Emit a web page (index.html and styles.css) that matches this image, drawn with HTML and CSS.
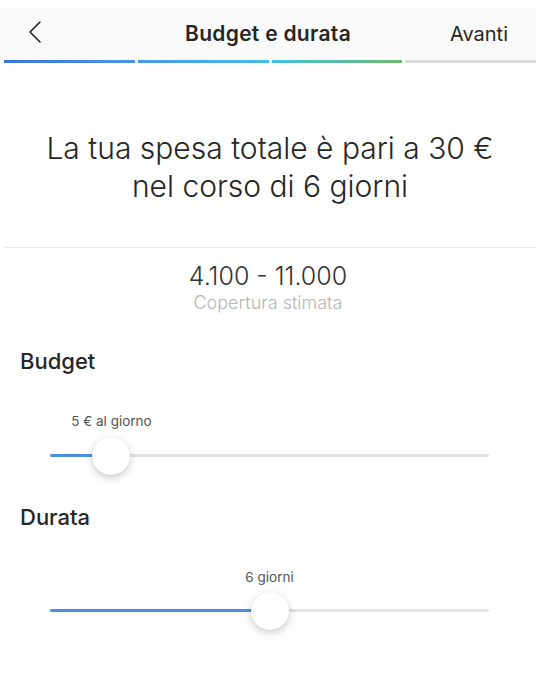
FILE: index.html
```html
<!DOCTYPE html>
<html lang="it">
<head>
    <meta charset="UTF-8">
    <meta name="viewport" content="width=device-width, initial-scale=1.0">
    <title>Budget e durata</title>
    <link rel="stylesheet" href="styles.css">
</head>
<body>

<!-- Top bar -->
<header class="topbar">
    <a class="back" href="#">
        <svg width="14" height="24" viewBox="0 0 14 24">
            <path d="M12 2 L2 12 L12 22" fill="none" stroke="#222" stroke-width="1.6" stroke-linecap="round" stroke-linejoin="round"/>
        </svg>
    </a>
    <h1 class="title">Budget e durata</h1>
    <a class="next" href="#">Avanti</a>
</header>

<!-- Step progress -->
<div class="progress">
    <span class="step step-1"></span>
    <span class="step step-2"></span>
    <span class="step step-3"></span>
    <span class="step step-4"></span>
</div>

<!-- Summary -->
<div class="summary">
    <p>La tua spesa totale è pari a 30 €<br>nel corso di 6 giorni</p>
</div>

<div class="reach">
    <div class="reach-value">4.100 - 11.000</div>
    <div class="reach-label">Copertura stimata</div>
</div>

<!-- Budget slider -->
<section class="setting setting-budget">
    <h2>Budget</h2>
    <div class="slider">
        <div class="slider-label" style="left: 14%">5 € al giorno</div>
        <div class="track">
            <div class="fill" style="width: 14%"></div>
            <div class="thumb" style="left: 14%"></div>
        </div>
    </div>
</section>

<!-- Duration slider -->
<section class="setting setting-days">
    <h2>Durata</h2>
    <div class="slider">
        <div class="slider-label" style="left: 50%">6 giorni</div>
        <div class="track">
            <div class="fill" style="width: 50%"></div>
            <div class="thumb" style="left: 50%"></div>
        </div>
    </div>
</section>

</body>
</html>
```

FILE: styles.css
```css
body {
    font-family: 'Inter', 'Liberation Sans', sans-serif;
    margin: 0;
    padding: 0 0 76px;
    background-color: #fff;
    color: #262626;
}

/* Top bar */
.topbar {
    margin-top: 7px;
    height: 53px;
    background-color: #fafafa;
    display: flex;
    align-items: center;
    justify-content: space-between;
    padding: 0 28px 0 28px;
}

.back {
    display: flex;
    width: 60px;
    padding-bottom: 4px;
}

.title {
    margin: 0;
    font-size: 21px;
    font-weight: 600;
    letter-spacing: 0.3px;
    color: #262626;
}

.next {
    width: 60px;
    text-align: right;
    font-size: 20px;
    color: #262626;
    text-decoration: none;
}

/* Progress steps */
.progress {
    display: flex;
    gap: 3px;
    margin-left: 4px;
    height: 3px;
}

.step {
    flex: 1;
}

.step-1 {
    background: linear-gradient(to right, #3a78d2, #4a94e6);
}

.step-2 {
    background: linear-gradient(to right, #4a98e8, #45bde6);
}

.step-3 {
    background: linear-gradient(to right, #45bfe0, #6dbb6a);
}

.step-4 {
    background-color: #dbdbdb;
}

/* Summary headline */
.summary {
    border-bottom: 1px solid #ececec;
    margin-left: 4px;
    padding: 66px 0 42px;
    text-align: center;
}

.summary p {
    margin: 0;
    font-size: 30px;
    font-weight: 300;
    line-height: 38px;
    color: #262626;
}

/* Estimated reach */
.reach {
    text-align: center;
    padding-top: 13px;
}

.reach-value {
    font-size: 25px;
    font-weight: 300;
    line-height: 30px;
    color: #333;
}

.reach-label {
    margin-top: 2px;
    font-size: 18px;
    font-weight: 300;
    line-height: 20px;
    color: #b5b5b5;
}

/* Settings */
.setting h2 {
    margin: 0;
    padding-left: 20px;
    font-size: 22px;
    font-weight: 500;
    line-height: 28px;
    color: #262626;
}

.setting-budget {
    margin-top: 34px;
}

.setting-days {
    margin-top: 46px;
}

.slider {
    position: relative;
    margin: 0 47px 0 50px;
}

.setting-budget .slider {
    padding-top: 79px;
}

.setting-days .slider {
    padding-top: 78px;
}

.slider-label {
    position: absolute;
    top: 38px;
    transform: translateX(-50%);
    font-size: 13.5px;
    line-height: 16px;
    color: #555;
    white-space: nowrap;
}

.track {
    position: relative;
    height: 3px;
    background-color: #e2e2e2;
    border-radius: 2px;
}

.fill {
    height: 100%;
    background-color: #4a90e2;
    border-radius: 2px;
}

.thumb {
    position: absolute;
    top: 50%;
    width: 38px;
    height: 38px;
    margin: -19px 0 0 -19px;
    border-radius: 50%;
    background-color: #fff;
    box-shadow: 0 3px 8px rgba(0, 0, 0, 0.2), 0 0 1px rgba(0, 0, 0, 0.12);
}
```
